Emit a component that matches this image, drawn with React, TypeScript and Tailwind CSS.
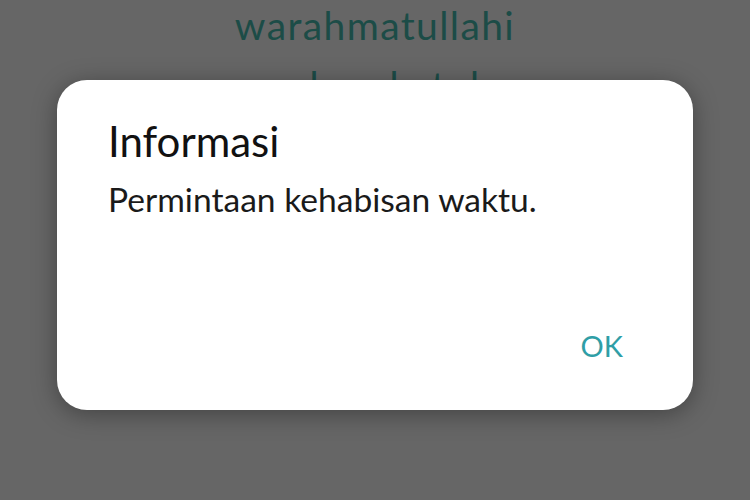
export default function App() {
  return (
    <div className="relative h-[500px] w-[750px] overflow-hidden bg-[#666666] font-['Lato','Noto_Sans',sans-serif]">
      <div className="-mt-[5px] flex flex-col items-center text-[39px] leading-[60px] tracking-[1.4px] text-[#1c4c47]">
        <p>warahmatullahi</p>
        <p>wabarakatuh</p>
      </div>

      <div className="absolute inset-0 flex items-center justify-center pb-[10px]">
        <div className="flex h-[330px] w-[636px] flex-col rounded-[30px] bg-white pl-[51px] pr-[70px] pt-[37px] pb-[46px] shadow-[0_4px_24px_rgba(0,0,0,0.35)]">
          <h1 className="text-[42px] leading-[48px] text-[#111111]">Informasi</h1>
          <p className="mt-[15px] text-[33.6px] leading-[38px] text-[#1a1a1a]">
            Permintaan kehabisan waktu.
          </p>
          <div className="mt-auto flex justify-end">
            <button className="text-[29px] leading-[36px] text-[#2f9ea6]">OK</button>
          </div>
        </div>
      </div>
    </div>
  );
}
